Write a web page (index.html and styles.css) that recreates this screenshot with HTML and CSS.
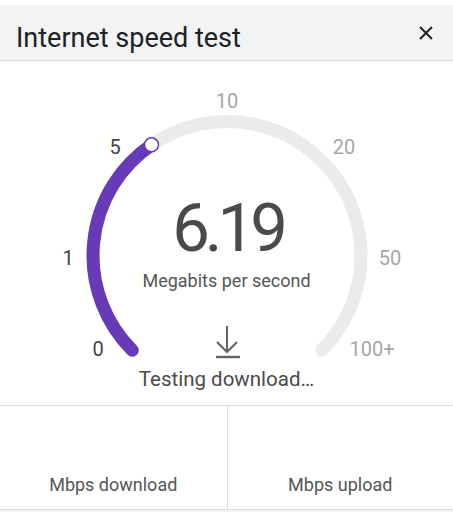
FILE: index.html
```html
<!DOCTYPE html>
<html lang="en">

<head>
    <meta charset="UTF-8">
    <meta name="viewport" content="width=device-width, initial-scale=1.0">
    <title>Internet speed test</title>
    <link rel="stylesheet" href="styles.css">
</head>

<body>
    <div class="panel">
        <header class="panel-header">
            <h1 class="panel-title">Internet speed test</h1>
            <button type="button" class="close-button" aria-label="Close">
                <svg width="14" height="14" viewBox="0 0 14 14">
                    <path d="M1 1 L13 13 M13 1 L1 13" stroke="#202124" stroke-width="2" fill="none" />
                </svg>
            </button>
        </header>

        <section class="gauge">
            <!-- dial: track, progress, knob and scale labels -->
            <svg class="gauge-dial" width="453" height="344" viewBox="0 0 453 344">
                <path d="M132.25 289.25 A134 134 0 1 1 321.75 289.25" class="track" />
                <path d="M132.25 289.25 A134 134 0 0 1 151.5 83.8" class="progress" />
                <circle cx="151.5" cy="83.8" r="7" class="knob" />
                <text x="98" y="295" class="tick reached">0</text>
                <text x="68" y="204" class="tick reached">1</text>
                <text x="115" y="93" class="tick reached">5</text>
                <text x="227" y="47" class="tick">10</text>
                <text x="344" y="93" class="tick">20</text>
                <text x="390" y="204" class="tick">50</text>
                <text x="372" y="295" class="tick">100+</text>
            </svg>

            <div class="speed-value">6.19</div>
            <div class="speed-unit">Megabits per second</div>
            <svg class="status-icon" width="26" height="36" viewBox="0 0 26 36">
                <path d="M12 3 V29 M2 19 L12 29 L22 19" stroke="#5f6368" stroke-width="2" fill="none" />
                <path d="M1 34 H25" stroke="#5f6368" stroke-width="2.4" fill="none" />
            </svg>
            <div class="status-text">Testing download…</div>
        </section>

        <div class="results">
            <div class="result-cell">Mbps download</div>
            <div class="result-cell">Mbps upload</div>
        </div>
    </div>
</body>

</html>
```

FILE: styles.css
```css
body {
    margin: 0;
    font-family: Roboto, "Noto Sans", sans-serif;
    background-color: #f1f3f4;
}

.panel {
    background-color: #fff;
    padding-top: 5px;
}

.panel-header {
    display: flex;
    justify-content: space-between;
    align-items: center;
    height: 56px;
    box-sizing: border-box;
    padding: 0 20px 0 16px;
    background-color: #f1f3f4;
    border-bottom: 1px solid #dadce0;
}

.panel-title {
    margin: 10px 0 0;
    font-size: 27px;
    font-weight: 400;
    line-height: 32px;
    color: #202124;
}

.close-button {
    display: flex;
    background: none;
    border: none;
    padding: 0;
    cursor: pointer;
}

.gauge {
    position: relative;
    height: 344px;
    display: flex;
    flex-direction: column;
    align-items: center;
    padding-top: 133px;
    box-sizing: border-box;
}

.gauge-dial {
    position: absolute;
    top: 0;
    left: 0;
}

.track {
    fill: none;
    stroke: #ebebeb;
    stroke-width: 13;
    stroke-linecap: round;
}

.progress {
    fill: none;
    stroke: #673ab7;
    stroke-width: 13;
    stroke-linecap: round;
}

.knob {
    fill: #fff;
    stroke: #673ab7;
    stroke-width: 1.5;
}

.tick {
    font-family: Roboto, sans-serif;
    font-size: 20px;
    text-anchor: middle;
    fill: #a6a6a6;
}

.tick.reached {
    fill: #444;
}

.speed-value {
    position: relative;
    font-size: 67px;
    line-height: 68px;
    letter-spacing: -5px;
    color: #4a4a4a;
    margin-left: 2px;
}

.speed-unit {
    position: relative;
    margin-top: 9px;
    font-size: 18px;
    line-height: 20px;
    color: #555;
}

.status-icon {
    position: relative;
    margin-top: 32px;
    margin-left: 2px;
}

.status-text {
    position: relative;
    margin-top: 8px;
    font-size: 20.5px;
    line-height: 24px;
    color: #4a4a4a;
}

.results {
    display: grid;
    grid-template-columns: 1fr 1fr;
    height: 105px;
    border-top: 1px solid #dadce0;
    border-bottom: 1px solid #dadce0;
    box-sizing: border-box;
}

.result-cell {
    display: flex;
    justify-content: center;
    align-items: flex-end;
    padding-bottom: 14px;
    font-size: 18px;
    line-height: 20px;
    color: #555;
}

.result-cell + .result-cell {
    border-left: 1px solid #dadce0;
}
```
